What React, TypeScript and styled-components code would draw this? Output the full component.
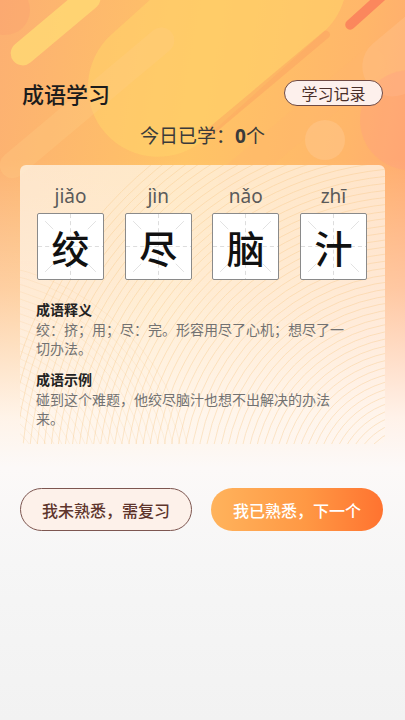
import React from "react";
import styled, { createGlobalStyle } from "styled-components";

const Global = createGlobalStyle`
  html, body { margin: 0; padding: 0; }
  body {
    font-family: "Noto Sans CJK SC", "Noto Sans", sans-serif;
    background: #f2f2f2;
  }
  * { box-sizing: border-box; }
`;

const Page = styled.div`
  position: relative;
  width: 405px;
  min-height: 720px;
  overflow: hidden;
  background:
    linear-gradient(180deg, rgba(255,255,255,0) 0%, rgba(255,255,255,0) 22%, rgba(255,255,255,0.35) 40%, rgba(255,250,246,0.9) 58%, #fcf9f8 65%, #f6f6f6 78%, #f2f2f2 100%),
    linear-gradient(100deg, #fcb072 0%, #ffc466 40%, #ffb66a 70%, #ff9c76 100%);
`;

const Backdrop = styled.svg`
  position: absolute;
  left: 0;
  top: 0;
  width: 405px;
  height: 480px;
  pointer-events: none;
`;

const Content = styled.div`
  position: relative;
  z-index: 1;
  display: flex;
  flex-direction: column;
  padding-top: 80px;
`;

const Header = styled.div`
  display: flex;
  align-items: center;
  justify-content: space-between;
  padding: 0 22px 0 22px;
  height: 26px;
`;

const Title = styled.h1`
  margin: 0;
  font-size: 22px;
  font-weight: 500;
  color: #1c1c1c;
  line-height: 26px;
`;

const RecordButton = styled.button`
  width: 99px;
  height: 26px;
  border: 1px solid #6f4a44;
  border-radius: 13px;
  background: #fdf0ec;
  color: #4a2f2a;
  font-family: inherit;
  font-size: 16px;
  font-weight: 400;
  padding: 0;
  line-height: 24px;
`;

const Today = styled.div`
  margin-top: 16px;
  text-align: center;
  font-size: 19px;
  line-height: 26px;
  color: #3a3a3a;
  b { font-weight: 700; font-family: "Noto Sans", sans-serif; }
`;

const Card = styled.div`
  position: relative;
  margin: 16px 20px 0 20px;
  height: 279px;
  border-radius: 6px;
  background: linear-gradient(180deg, rgba(255, 248, 238, 0.72) 0%, rgba(255, 246, 238, 0.6) 100%);
  overflow: hidden;
`;

const CardArt = styled.svg`
  position: absolute;
  left: 0;
  top: 0;
  width: 365px;
  height: 279px;
`;

const CardBody = styled.div`
  position: relative;
  display: flex;
  flex-direction: column;
  padding: 18px 18px 0 17px;
`;

const Chars = styled.div`
  display: flex;
  justify-content: space-between;
`;

const CharCol = styled.div`
  display: flex;
  flex-direction: column;
  align-items: center;
  width: 67px;
`;

const Pinyin = styled.div`
  font-family: "Noto Sans", sans-serif;
  font-size: 19px;
  line-height: 26px;
  color: #5a5a5a;
  margin-bottom: 4px;
`;

const Box = styled.div`
  position: relative;
  width: 67px;
  height: 67px;
  border: 1.5px solid #8a8a8a;
  border-radius: 2px;
  background: #ffffff;
  display: flex;
  align-items: center;
  justify-content: center;
`;

const Guides = styled.svg`
  position: absolute;
  inset: 0;
  width: 100%;
  height: 100%;
`;

const Hanzi = styled.span`
  position: relative;
  font-size: 38px;
  font-weight: 500;
  line-height: 1;
  color: #111;
`;

const Section = styled.div<{ $top: number }>`
  display: flex;
  flex-direction: column;
  margin-left: -1px;
  width: 316px;
  margin-top: ${(p) => p.$top}px;
`;

const SectionTitle = styled.div`
  font-size: 14px;
  font-weight: 700;
  line-height: 20px;
  color: #222;
`;

const SectionText = styled.div`
  font-size: 14px;
  line-height: 19px;
  color: #727272;
  margin-top: 1px;
`;

const Actions = styled.div`
  display: flex;
  justify-content: space-between;
  padding: 0 22px 0 20px;
  margin-top: 44px;
`;

const ActionButton = styled.button<{ $primary?: boolean }>`
  width: 172px;
  height: 43px;
  border-radius: 22px;
  font-family: inherit;
  font-size: 16px;
  font-weight: 500;
  padding: 0;
  border: ${(p) => (p.$primary ? "none" : "1.5px solid #7d5650")};
  background: ${(p) =>
    p.$primary ? "linear-gradient(90deg, #ffb35c 0%, #ff9844 55%, #ff7330 100%)" : "#fdf1ea"};
  color: ${(p) => (p.$primary ? "#ffffff" : "#5e352c")};
`;

const items = [
  { py: "jiǎo", ch: "绞" },
  { py: "jìn", ch: "尽" },
  { py: "nǎo", ch: "脑" },
  { py: "zhī", ch: "汁" },
];

function GuideLines() {
  return (
    <Guides viewBox="0 0 64 64" preserveAspectRatio="none">
      <g stroke="#cfcfcf" strokeWidth="0.7" strokeDasharray="4 3" fill="none">
        <line x1="32" y1="0" x2="32" y2="64" />
        <line x1="0" y1="32" x2="64" y2="32" />
      </g>
      <g stroke="#d0d0d0" strokeWidth="0.6" fill="none">
        <line x1="7" y1="7" x2="15" y2="15" />
        <line x1="57" y1="7" x2="49" y2="15" />
        <line x1="7" y1="57" x2="15" y2="49" />
        <line x1="57" y1="57" x2="49" y2="49" />
      </g>
    </Guides>
  );
}

function Arcs() {
  const rings: number[] = [];
  for (let r = 30; r <= 420; r += 7) rings.push(r);
  return (
    <CardArt viewBox="0 0 365 279">
      <g fill="none" stroke="#f6c47e" strokeWidth="0.8" opacity="0.45">
        {rings.map((r) => (
          <circle key={"a" + r} cx={395} cy={320} r={r} />
        ))}
      </g>
      <g fill="none" stroke="#f6c88e" strokeWidth="0.7" opacity="0.3">
        {rings.slice(6, 30).map((r) => (
          <circle key={"b" + r} cx={-60} cy={330} r={r} />
        ))}
      </g>
    </CardArt>
  );
}

function TopArt() {
  return (
    <Backdrop viewBox="0 0 405 480">
      <g transform="rotate(-42 210 40)">
        <rect x="70" y="-30" width="300" height="140" rx="70" fill="#ffd46a" opacity="0.55" />
      </g>
      <g transform="rotate(-40 55 25)">
        <rect x="0" y="14" width="110" height="24" rx="12" fill="#ffdc74" opacity="0.75" />
      </g>
      <g transform="rotate(-42 368 10)">
        <rect x="340" y="4" width="62" height="10" rx="5" fill="#fa7f5a" opacity="0.85" />
      </g>
      <g transform="rotate(-40 260 90)">
        <rect x="190" y="86" width="160" height="8" rx="4" fill="#fb9a5e" opacity="0.4" />
      </g>
      <g transform="rotate(-40 290 130)">
        <rect x="200" y="116" width="210" height="30" rx="15" fill="#ffb66e" opacity="0.3" />
      </g>
      <g transform="rotate(-40 80 110)">
        <rect x="-20" y="96" width="220" height="26" rx="13" fill="#ffcc84" opacity="0.3" />
      </g>
      <circle cx="5" cy="10" r="25" fill="#fba070" opacity="0.4" />
      <circle cx="325" cy="140" r="20" fill="#ffc88e" opacity="0.5" />
      <g transform="rotate(-40 400 60)">
        <rect x="360" y="30" width="140" height="60" rx="30" fill="#ffc08a" opacity="0.45" />
      </g>
      <circle cx="410" cy="120" r="50" fill="#ff9c84" opacity="0.3" />
    </Backdrop>
  );
}

export default function App() {
  return (
    <>
      <Global />
      <Page>
        <TopArt />
        <Content>
          <Header>
            <Title>成语学习</Title>
            <RecordButton>学习记录</RecordButton>
          </Header>
          <Today>
            今日已学：<b>0</b>个
          </Today>
          <Card>
            <Arcs />
            <CardBody>
              <Chars>
                {items.map((it) => (
                  <CharCol key={it.ch}>
                    <Pinyin>{it.py}</Pinyin>
                    <Box>
                      <GuideLines />
                      <Hanzi>{it.ch}</Hanzi>
                    </Box>
                  </CharCol>
                ))}
              </Chars>
              <Section $top={19}>
                <SectionTitle>成语释义</SectionTitle>
                <SectionText>绞：挤；用；尽：完。形容用尽了心机；想尽了一切办法。</SectionText>
              </Section>
              <Section $top={11}>
                <SectionTitle>成语示例</SectionTitle>
                <SectionText>碰到这个难题，他绞尽脑汁也想不出解决的办法来。</SectionText>
              </Section>
            </CardBody>
          </Card>
          <Actions>
            <ActionButton>我未熟悉，需复习</ActionButton>
            <ActionButton $primary>我已熟悉，下一个</ActionButton>
          </Actions>
        </Content>
      </Page>
    </>
  );
}
